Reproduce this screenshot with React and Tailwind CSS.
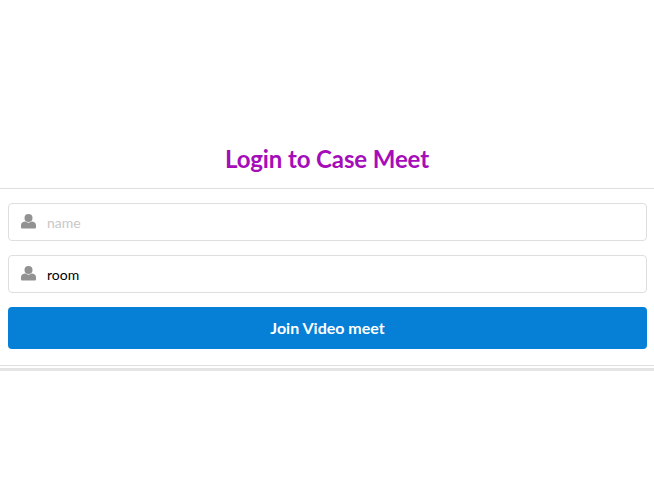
const UserIcon = () => {
  return (
    <svg
      className="absolute left-[13px] top-[11px] w-[15px] h-[15px] text-[#929292]"
      viewBox="0 0 15 15"
      fill="currentColor"
    >
      <circle cx="7.5" cy="4" r="4" />
      <path d="M4.4 7.6C5.2 8.3 6.3 8.7 7.5 8.7S9.8 8.3 10.6 7.6C13 7.8 15 9 15 11V13.2C15 14 14.4 14.5 13.7 14.5H1.3C.6 14.5 0 14 0 13.2V11C0 9 2 7.8 4.4 7.6Z" />
    </svg>
  );
};

const Field = ({ placeholder, defaultValue }) => {
  return (
    <div className="relative">
      <UserIcon />
      <input
        className="w-full h-[38px] pl-[38px] pr-3 border border-[#dedede] rounded-[4px] bg-white text-[14px] text-black placeholder:text-[#c8c8c8] outline-0"
        placeholder={placeholder}
        defaultValue={defaultValue}
      />
    </div>
  );
};

const App = () => {
  return (
    <div className="min-h-screen bg-white pt-[143px] font-['Lato',sans-serif]">
      <h2 className="h-[45px] text-center text-[24px] leading-[32px] font-bold tracking-[-0.12px] text-[#a50db9]">
        Login to Case Meet
      </h2>
      <div className="border-t border-[#dedede] pl-2 pr-[7px] pt-[14px] pb-4 flex flex-col gap-[14px]">
        <Field placeholder="name" />
        <Field defaultValue="room" />
        <button className="h-[42px] rounded-[4px] bg-[#0580d6] text-white text-[16px] font-bold">
          Join Video meet
        </button>
      </div>
      <div className="border-t border-[#dedede] pt-[2px]">
        <div className="h-[3px] bg-[#e4e4e4]"></div>
      </div>
    </div>
  );
};

export default App;
